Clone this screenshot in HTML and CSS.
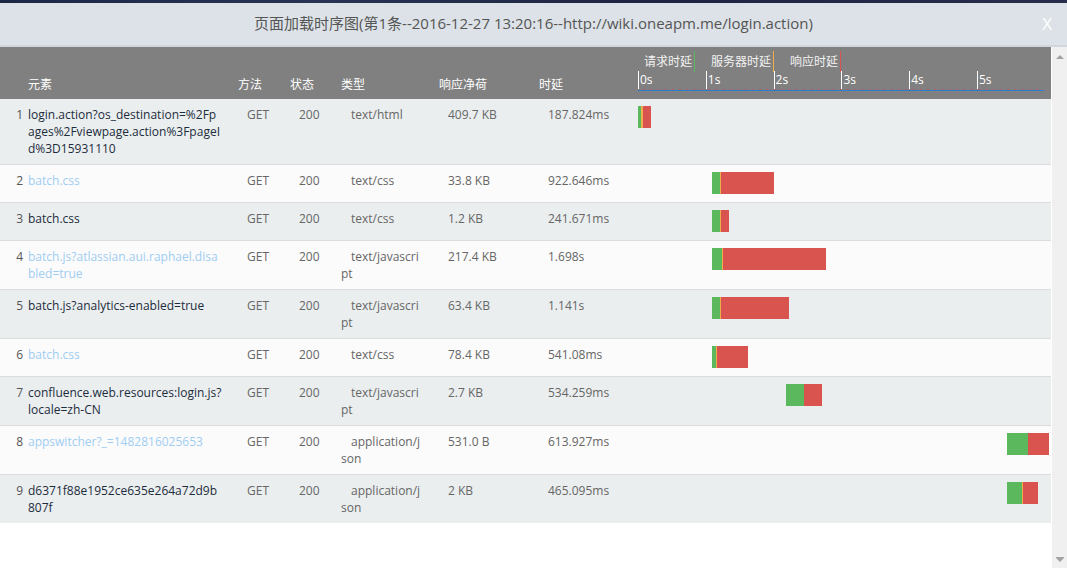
FILE: index.html
```html
<!DOCTYPE html>
<html lang="zh-CN">
<head>
  <meta charset="UTF-8">
  <title>页面加载时序图</title>
  <link rel="stylesheet" href="styles.css">
</head>
<body>

  <div class="backdrop"></div>

  <div class="modal">
    <div class="modal-title">
      页面加载时序图(第1条--2016-12-27 13:20:16--http://wiki.oneapm.me/login.action)
      <span class="close">X</span>
    </div>

    <div class="modal-body">
      <div class="scroll-area">
        <table class="timing">
          <colgroup>
            <col class="c-name">
            <col class="c-method">
            <col class="c-status">
            <col class="c-type">
            <col class="c-size">
            <col class="c-time">
            <col>
          </colgroup>
          <thead>
            <tr>
              <th class="th-name">元素</th>
              <th>方法</th>
              <th>状态</th>
              <th>类型</th>
              <th>响应净荷</th>
              <th>时延</th>
              <th class="th-chart">
                <div class="legend">
                  <span class="lg lg-req">请求时延</span>
                  <span class="lg lg-srv">服务器时延</span>
                  <span class="lg lg-res">响应时延</span>
                </div>
                <div class="axis">
                  <span class="tick">0s</span>
                  <span class="tick">1s</span>
                  <span class="tick">2s</span>
                  <span class="tick">3s</span>
                  <span class="tick">4s</span>
                  <span class="tick">5s</span>
                </div>
              </th>
            </tr>
          </thead>
          <tbody>
            <tr>
              <td><div class="el"><span class="idx">1</span><span class="url">login.action?os_destination=%2Fpages%2Fviewpage.action%3FpageId%3D15931110</span></div></td>
              <td>GET</td><td>200</td><td class="type">text/html</td><td>409.7 KB</td><td>187.824ms</td>
              <td class="chart"><div class="bar" style="margin-left:0px"><i class="req" style="width:3px"></i><i class="srv" style="width:2px"></i><i class="res" style="width:8px"></i></div></td>
            </tr>
            <tr>
              <td><div class="el"><span class="idx">2</span><span class="url link">batch.css</span></div></td>
              <td>GET</td><td>200</td><td class="type">text/css</td><td>33.8 KB</td><td>922.646ms</td>
              <td class="chart"><div class="bar" style="margin-left:74px"><i class="req" style="width:8px"></i><i class="srv" style="width:1px"></i><i class="res" style="width:53px"></i></div></td>
            </tr>
            <tr>
              <td><div class="el"><span class="idx">3</span><span class="url">batch.css</span></div></td>
              <td>GET</td><td>200</td><td class="type">text/css</td><td>1.2 KB</td><td>241.671ms</td>
              <td class="chart"><div class="bar" style="margin-left:74px"><i class="req" style="width:8px"></i><i class="srv" style="width:1px"></i><i class="res" style="width:8px"></i></div></td>
            </tr>
            <tr>
              <td><div class="el"><span class="idx">4</span><span class="url link">batch.js?atlassian.aui.raphael.disabled=true</span></div></td>
              <td>GET</td><td>200</td><td class="type">text/javascript</td><td>217.4 KB</td><td>1.698s</td>
              <td class="chart"><div class="bar" style="margin-left:74px"><i class="req" style="width:10px"></i><i class="srv" style="width:1px"></i><i class="res" style="width:103px"></i></div></td>
            </tr>
            <tr>
              <td><div class="el"><span class="idx">5</span><span class="url">batch.js?analytics-enabled=true</span></div></td>
              <td>GET</td><td>200</td><td class="type">text/javascript</td><td>63.4 KB</td><td>1.141s</td>
              <td class="chart"><div class="bar" style="margin-left:74px"><i class="req" style="width:8px"></i><i class="srv" style="width:1px"></i><i class="res" style="width:68px"></i></div></td>
            </tr>
            <tr>
              <td><div class="el"><span class="idx">6</span><span class="url link">batch.css</span></div></td>
              <td>GET</td><td>200</td><td class="type">text/css</td><td>78.4 KB</td><td>541.08ms</td>
              <td class="chart"><div class="bar" style="margin-left:74px"><i class="req" style="width:4px"></i><i class="srv" style="width:1px"></i><i class="res" style="width:31px"></i></div></td>
            </tr>
            <tr>
              <td><div class="el"><span class="idx">7</span><span class="url">confluence.web.resources:login.js?locale=zh-CN</span></div></td>
              <td>GET</td><td>200</td><td class="type">text/javascript</td><td>2.7 KB</td><td>534.259ms</td>
              <td class="chart"><div class="bar" style="margin-left:148px"><i class="req" style="width:18px"></i><i class="res" style="width:18px"></i></div></td>
            </tr>
            <tr>
              <td><div class="el"><span class="idx">8</span><span class="url link">appswitcher?_=1482816025653</span></div></td>
              <td>GET</td><td>200</td><td class="type">application/json</td><td>531.0 B</td><td>613.927ms</td>
              <td class="chart"><div class="bar" style="margin-left:369px"><i class="req" style="width:21px"></i><i class="res" style="width:21px"></i></div></td>
            </tr>
            <tr>
              <td><div class="el"><span class="idx">9</span><span class="url">d6371f88e1952ce635e264a72d9b807f</span></div></td>
              <td>GET</td><td>200</td><td class="type">application/json</td><td>2 KB</td><td>465.095ms</td>
              <td class="chart"><div class="bar" style="margin-left:369px"><i class="req" style="width:15px"></i><i class="srv" style="width:1px"></i><i class="res" style="width:15px"></i></div></td>
            </tr>
          </tbody>
        </table>
      </div>

      <div class="scrollbar">
        <span class="arrow up"></span>
        <span class="arrow down"></span>
      </div>
    </div>
  </div>

</body>
</html>
```

FILE: styles.css
```css
body {
  margin: 0;
  padding: 0;
  height: 568px;
  overflow: hidden;
  background-color: #fff;
  font-family: 'Open Sans', 'Noto Sans CJK SC', sans-serif;
  font-size: 12px;
  color: #666;
}

.backdrop {
  height: 3px;
  background: linear-gradient(to right, #1c2746, #2a3354 30%, #1d2542 60%, #262d4d);
}

.modal {
  display: flex;
  flex-direction: column;
  height: 565px;
}

.modal-title {
  position: relative;
  height: 42px;
  line-height: 40px;
  text-align: center;
  font-size: 15px;
  color: #555;
  background-color: #dce2e7;
  border-bottom: 2px solid #d0d6db;
}

.close {
  position: absolute;
  right: 15px;
  top: 1px;
  font-size: 17px;
  color: #fff;
}

.modal-body {
  flex: 1;
  display: flex;
  min-height: 0;
}

.scroll-area {
  flex: 1;
  background-color: #fff;
}

.scrollbar {
  width: 15px;
  border-left: 1px solid #fff;
  background-color: #f0f0f0;
  display: flex;
  flex-direction: column;
  justify-content: space-between;
  align-items: center;
  padding: 8px 0 6px;
}

.arrow {
  width: 0;
  height: 0;
  border-left: 4px solid transparent;
  border-right: 4px solid transparent;
}

.arrow.up {
  border-bottom: 4px solid #a3a3a3;
}

.arrow.down {
  border-top: 4px solid #a3a3a3;
  box-shadow: 0 -1px 0 #a3a3a3;
}

/* table */
.timing {
  width: 100%;
  border-collapse: collapse;
  table-layout: fixed;
}

.c-name { width: 238px; }
.c-method { width: 52px; }
.c-status { width: 51px; }
.c-type { width: 98px; }
.c-size { width: 100px; }
.c-time { width: 99px; }

.timing th {
  height: 46px;
  padding: 0 0 6px;
  background-color: #808080;
  color: #fff;
  font-weight: normal;
  text-align: left;
  vertical-align: bottom;
  line-height: 17px;
}

.timing th.th-name {
  padding-left: 28px;
}

.timing th.th-chart {
  padding: 0;
  vertical-align: top;
}

.legend {
  display: flex;
  margin-top: 4px;
  height: 21px;
  line-height: 21px;
  color: #f2f2f2;
}

.lg {
  padding: 0 2px 0 16px;
  border-right: 1px solid;
}

.lg-req {
  padding-left: 6px;
  border-color: #5cb85c;
}

.lg-srv { border-color: #f0ad4e; }
.lg-res { border-color: #d9534f; }

.axis {
  display: flex;
  width: 406px;
  margin-top: -1px;
  padding-bottom: 1px;
  border-bottom: 1px solid #2f7bd1;
  background: linear-gradient(to right, #e23a3a 1px, transparent 1px) 5px 100% / 7.3px 1px repeat-x;
}

.tick {
  width: 67.8px;
  flex-shrink: 0;
  height: 18px;
  line-height: 18px;
  padding-left: 1px;
  border-left: 1px solid #fff;
  box-sizing: border-box;
  color: #fff;
}

.timing td {
  padding: 7px 0 7px 9px;
  line-height: 17px;
  vertical-align: top;
  border-bottom: 1px solid #dcdcdc;
}

.timing tbody tr:nth-child(odd) td {
  background-color: #eaeeef;
}

.timing tbody tr:nth-child(even) td {
  background-color: #fbfbfb;
}

.timing tbody tr:last-child td {
  border-bottom: none;
}

.timing td:first-child {
  padding-left: 0;
}

.el {
  display: flex;
}

.idx {
  width: 23px;
  margin-right: 5px;
  text-align: right;
  color: #555;
}

.url {
  width: 194px;
  word-break: break-all;
  color: #1d2c3c;
}

.url.link {
  color: #9fcdf2;
}

.timing td.type {
  padding-left: 0;
  padding-right: 16px;
  text-indent: 10px;
  word-break: break-all;
}

.timing td.chart {
  padding: 7px 0 8px;
}

.bar {
  display: flex;
  height: 22px;
}

.bar i {
  display: block;
  height: 22px;
}

.req { background-color: #5cb85c; }
.srv { background-color: #f0ad4e; }
.res { background-color: #d9534f; }
```
